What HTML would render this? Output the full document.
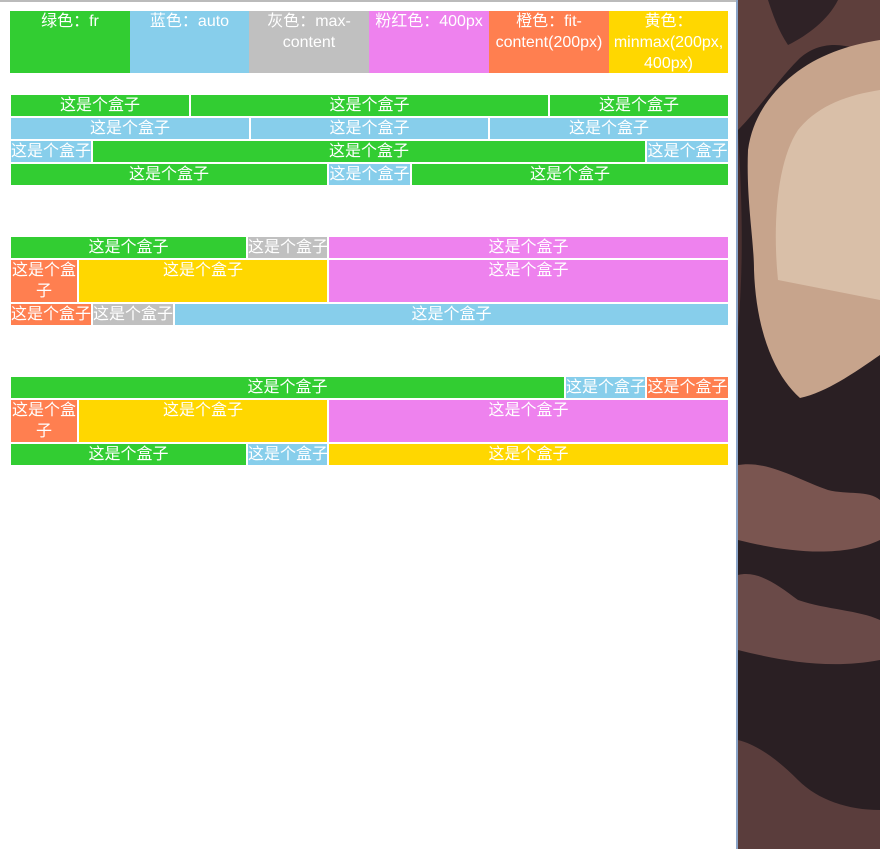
<!DOCTYPE html>
<html><head><meta charset="utf-8"><style>
body{margin:0;width:880px;height:849px;background:#fff;position:relative;overflow:hidden;font-family:"Liberation Sans","Noto Sans CJK SC",sans-serif;}
.b{position:absolute;color:#fff;font-size:16px;line-height:21px;text-align:center;overflow:hidden;white-space:nowrap;}
.w{white-space:normal}
.g{background:#32cd32}.l{background:#87ceeb}.y{background:#c0c0c0}.p{background:#ee82ee}.o{background:#ff7f50}.d{background:#ffd700}
#top{position:absolute;left:0;top:0;width:737px;height:2px;background:#bbb}
#vl{position:absolute;left:736px;top:0;width:2px;height:849px;background:#8aa4c8}
</style></head><body>
<div id="top"></div>
<div class="b g" style="left:10px;top:11px;width:120px;height:62px">绿色：fr</div>
<div class="b l" style="left:130px;top:11px;width:119px;height:62px">蓝色：auto</div>
<div class="b y" style="left:249px;top:11px;width:120px;height:62px">灰色：max-<br>content</div>
<div class="b p" style="left:369px;top:11px;width:120px;height:62px">粉红色：400px</div>
<div class="b o" style="left:489px;top:11px;width:120px;height:62px">橙色：fit-<br>content(200px)</div>
<div class="b d" style="left:609px;top:11px;width:119px;height:62px">黄色：<br>minmax(200px,<br>400px)</div>

<div class="b g" style="left:11px;top:95px;width:178px;height:21px">这是个盒子</div>
<div class="b g" style="left:191px;top:95px;width:357px;height:21px">这是个盒子</div>
<div class="b g" style="left:550px;top:95px;width:178px;height:21px">这是个盒子</div>
<div class="b l" style="left:11px;top:118px;width:238px;height:21px">这是个盒子</div>
<div class="b l" style="left:251px;top:118px;width:237px;height:21px">这是个盒子</div>
<div class="b l" style="left:490px;top:118px;width:238px;height:21px">这是个盒子</div>
<div class="b l" style="left:11px;top:141px;width:80px;height:21px">这是个盒子</div>
<div class="b g" style="left:93px;top:141px;width:552px;height:21px">这是个盒子</div>
<div class="b l" style="left:647px;top:141px;width:81px;height:21px">这是个盒子</div>
<div class="b g" style="left:11px;top:164px;width:316px;height:21px">这是个盒子</div>
<div class="b l" style="left:329px;top:164px;width:81px;height:21px">这是个盒子</div>
<div class="b g" style="left:412px;top:164px;width:316px;height:21px">这是个盒子</div>

<div class="b g" style="left:11px;top:237px;width:235px;height:21px">这是个盒子</div>
<div class="b y" style="left:248px;top:237px;width:79px;height:21px">这是个盒子</div>
<div class="b p" style="left:329px;top:237px;width:399px;height:21px">这是个盒子</div>
<div class="b o" style="left:11px;top:260px;width:66px;height:42px">这是个盒<br>子</div>
<div class="b d" style="left:79px;top:260px;width:248px;height:42px">这是个盒子</div>
<div class="b p" style="left:329px;top:260px;width:399px;height:42px">这是个盒子</div>
<div class="b o" style="left:11px;top:304px;width:80px;height:21px">这是个盒子</div>
<div class="b y" style="left:93px;top:304px;width:80px;height:21px">这是个盒子</div>
<div class="b l" style="left:175px;top:304px;width:553px;height:21px">这是个盒子</div>

<div class="b g" style="left:11px;top:377px;width:553px;height:21px">这是个盒子</div>
<div class="b l" style="left:566px;top:377px;width:79px;height:21px">这是个盒子</div>
<div class="b o" style="left:647px;top:377px;width:81px;height:21px">这是个盒子</div>
<div class="b o" style="left:11px;top:400px;width:66px;height:42px">这是个盒<br>子</div>
<div class="b d" style="left:79px;top:400px;width:248px;height:42px">这是个盒子</div>
<div class="b p" style="left:329px;top:400px;width:399px;height:42px">这是个盒子</div>
<div class="b g" style="left:11px;top:444px;width:235px;height:21px">这是个盒子</div>
<div class="b l" style="left:248px;top:444px;width:79px;height:21px">这是个盒子</div>
<div class="b d" style="left:329px;top:444px;width:399px;height:21px">这是个盒子</div>

<div id="vl"></div>
<svg style="position:absolute;left:738px;top:0" width="142" height="849" viewBox="0 0 142 849">
<rect width="142" height="849" fill="#2a1f23"/>
<path d="M0 0 H142 V60 C110 40 80 40 60 60 C40 80 20 110 0 130Z" fill="#5e3f3c"/>
<path d="M30 0 H100 C90 20 70 35 50 45 C40 30 35 15 30 0Z" fill="#2f2226"/>
<path d="M142 40 C110 45 80 55 55 75 C30 95 14 120 10 150 C8 200 16 240 16 270 C18 330 36 375 62 398 C90 392 120 370 142 355Z" fill="#c7a48c"/>
<path d="M142 90 C110 95 80 105 60 130 C40 160 34 220 40 280 L142 300Z" fill="#d9bfa8"/>
<path d="M0 130 C4 200 6 260 0 330Z" fill="#4a3030"/>
<path d="M0 465 C30 460 60 480 90 490 C110 495 130 490 142 500 V540 C100 560 40 550 0 540Z" fill="#7a5550"/>
<path d="M0 575 C20 570 40 585 60 600 C90 610 120 610 142 620 V660 C90 670 40 660 0 650Z" fill="#6a4a48"/>
<path d="M0 740 C20 745 40 760 60 780 C80 800 110 810 142 810 V849 H0Z" fill="#5a3d3c"/>
</svg>
</body></html>
